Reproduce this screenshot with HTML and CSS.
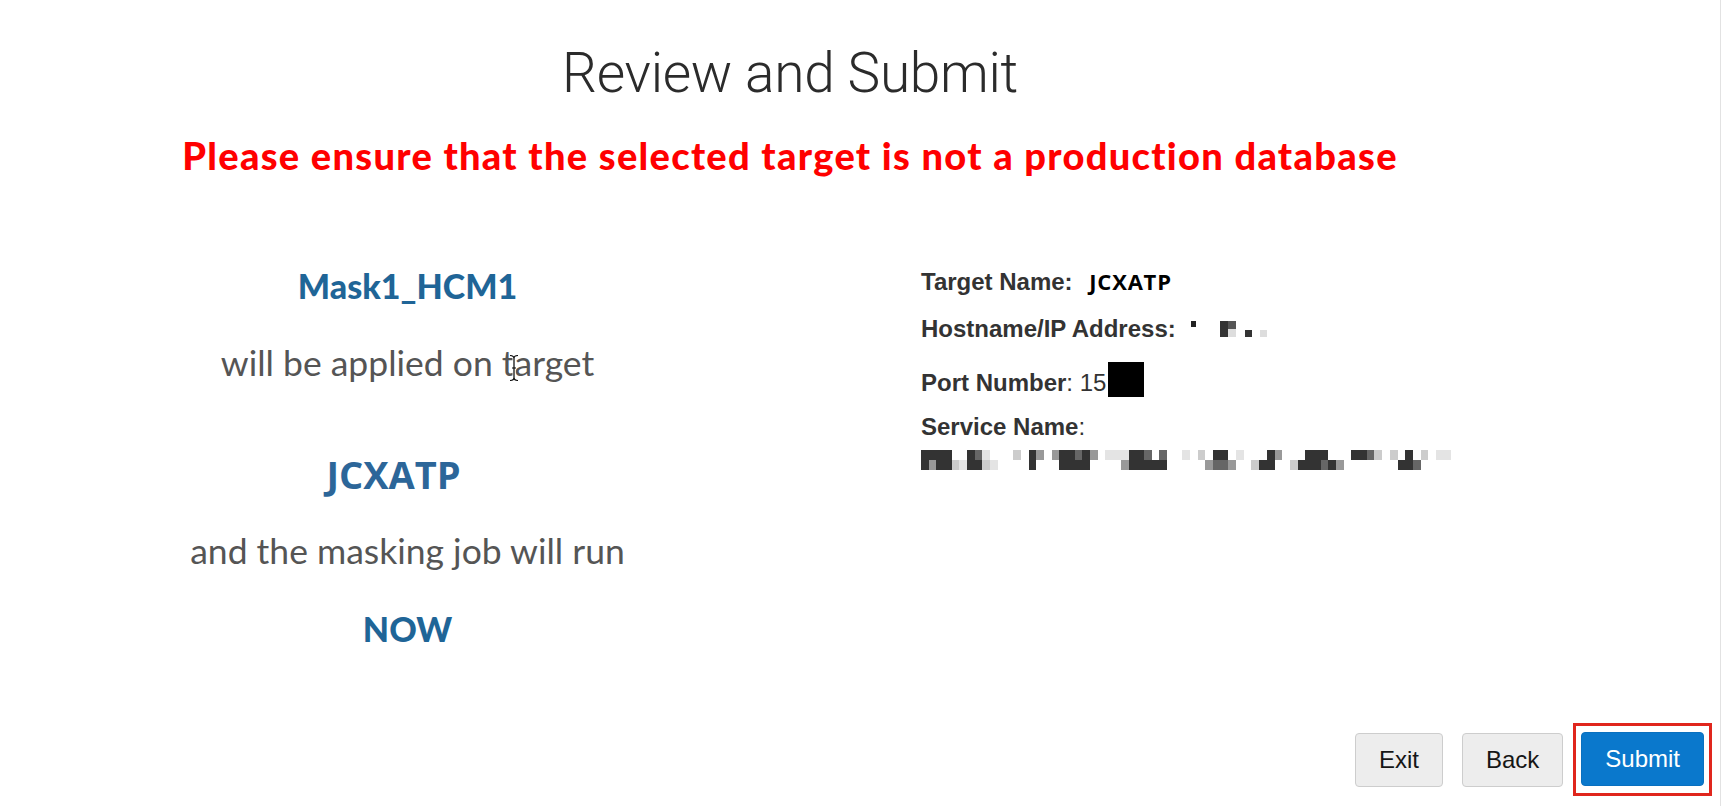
FILE: index.html
```html
<!DOCTYPE html>
<html lang="en">
<head>
<meta charset="utf-8">
<title>Review and Submit</title>
<link rel="stylesheet" href="styles.css">
</head>
<body>
<div class="page">
  <main class="wizard">
    <h1 class="title">Review and Submit</h1>
    <p class="warning">Please ensure that the selected target is not a production database</p>
    <div class="summary">
      <div class="summary-left">
        <div class="name">Mask1_HCM1</div>
        <div class="phrase">will be applied on target</div>
        <div class="target">JCXATP</div>
        <div class="phrase phrase-run">and the masking job will run</div>
        <div class="name name-now">NOW</div>
        <svg class="cursor" width="12" height="28" viewBox="0 0 12 28" aria-hidden="true">
          <path d="M2 1.5 Q6 1.5 6 4.5 Q6 1.5 10 1.5 M6 4.5 V23.5 M2 26.5 Q6 26.5 6 23.5 Q6 26.5 10 26.5 M4 14 H8" fill="none" stroke="#fff" stroke-width="3"/>
          <path d="M2 1.5 Q6 1.5 6 4.5 Q6 1.5 10 1.5 M6 4.5 V23.5 M2 26.5 Q6 26.5 6 23.5 Q6 26.5 10 26.5 M4 14 H8" fill="none" stroke="#000" stroke-width="1.2"/>
        </svg>
      </div>
      <div class="details">
        <div class="row"><span class="label">Target Name:</span> <span class="target-value">JCXATP</span></div>
        <div class="row"><span class="label">Hostname/IP Address:</span> <svg class="redact-host" width="78" height="16" viewBox="0 0 78 16" shape-rendering="crispEdges" aria-hidden="true">
            <rect x="1" y="0" width="5" height="6" fill="#222"/>
            <rect x="30" y="0" width="8" height="16" fill="#333"/>
            <rect x="38" y="0" width="8" height="8" fill="#555"/>
            <rect x="38" y="8" width="8" height="8" fill="#ddd"/>
            <rect x="55" y="9" width="7" height="7" fill="#333"/>
            <rect x="70" y="9" width="7" height="7" fill="#ddd"/>
          </svg></div>
        <div class="row"><span class="label">Port Number</span>: 15<span class="redact-port"></span></div>
        <div class="row"><span class="label">Service Name</span>:</div>
        <svg class="redact-service" width="538" height="20" viewBox="0 0 70 2" preserveAspectRatio="none" shape-rendering="crispEdges" aria-hidden="true">
          <g fill="#333">
            <rect x="0" y="0" width="4" height="1"/><rect x="0" y="1" width="1" height="1"/><rect x="2" y="1" width="2" height="1"/>
            <rect x="6" y="0" width="1" height="2"/><rect x="7" y="1" width="1" height="1"/>
            <rect x="14" y="0" width="1" height="2"/>
            <rect x="18" y="0" width="2" height="2"/><rect x="20" y="1" width="2" height="1"/><rect x="21" y="0" width="1" height="1"/>
            <rect x="27" y="0" width="2" height="2"/><rect x="29" y="1" width="3" height="1"/>
            <rect x="38" y="0" width="2" height="1"/>
            <rect x="44" y="1" width="2" height="1"/><rect x="45" y="0" width="1" height="1"/>
            <rect x="49" y="1" width="5" height="1"/><rect x="50" y="0" width="3" height="1"/>
            <rect x="56" y="0" width="2" height="1"/>
            <rect x="62" y="1" width="2" height="1"/><rect x="63" y="0" width="1" height="1"/>
          </g>
          <g fill="#666">
            <rect x="7" y="0" width="1" height="1"/><rect x="20" y="0" width="1" height="1"/><rect x="29" y="0" width="1" height="1"/><rect x="31" y="0" width="1" height="1"/>
            <rect x="38" y="1" width="2" height="1"/><rect x="52" y="1" width="1" height="1"/><rect x="58" y="0" width="1" height="1"/><rect x="64" y="1" width="1" height="1"/>
          </g>
          <g fill="#999">
            <rect x="1" y="1" width="1" height="1"/><rect x="15" y="0" width="1" height="1"/><rect x="17" y="0" width="1" height="1"/><rect x="22" y="0" width="1" height="1"/>
            <rect x="26" y="1" width="1" height="1"/><rect x="37" y="1" width="1" height="1"/><rect x="40" y="1" width="1" height="1"/><rect x="46" y="0" width="1" height="1"/><rect x="54" y="1" width="1" height="1"/>
          </g>
          <g fill="#ccc">
            <rect x="4" y="1" width="1" height="1"/><rect x="8" y="1" width="1" height="1"/><rect x="12" y="0" width="1" height="1"/><rect x="36" y="0" width="1" height="1"/>
            <rect x="43" y="1" width="1" height="1"/><rect x="48" y="1" width="1" height="1"/><rect x="59" y="0" width="1" height="1"/><rect x="61" y="0" width="1" height="1"/><rect x="65" y="0" width="1" height="1"/>
          </g>
          <g fill="#e4e4e4">
            <rect x="5" y="1" width="1" height="1"/><rect x="8" y="0" width="1" height="1"/><rect x="9" y="1" width="1" height="1"/><rect x="24" y="0" width="3" height="1"/>
            <rect x="34" y="0" width="1" height="1"/><rect x="41" y="0" width="1" height="1"/><rect x="67" y="0" width="2" height="1"/>
          </g>
        </svg>
      </div>
    </div>
  </main>
  <footer class="actions">
    <button class="btn btn-exit" type="button">Exit</button>
    <button class="btn btn-back" type="button">Back</button>
    <div class="highlight">
      <button class="btn btn-primary" type="button">Submit</button>
    </div>
  </footer>
</div>
</body>
</html>
```

FILE: styles.css
```css
* {
  box-sizing: border-box;
}

html, body {
  margin: 0;
  padding: 0;
  background: #fff;
}

.page {
  width: 1721px;
  height: 806px;
  display: flex;
  flex-direction: column;
  border-right: 1px solid #e2e2e2;
  overflow: hidden;
}

.wizard {
  flex: 1;
  width: 1580px;
  padding-top: 41px;
}

.title {
  margin: 0;
  font-family: Roboto, "Liberation Sans", sans-serif;
  font-weight: 300;
  font-size: 55px;
  line-height: 64px;
  color: #2b2b2b;
  text-align: center;
  letter-spacing: -0.3px;
}

.warning {
  margin: 27px 0 0;
  font-family: Lato, "Open Sans", sans-serif;
  font-weight: 900;
  font-size: 38px;
  line-height: 46px;
  letter-spacing: 1.3px;
  color: #ff0000;
  text-align: center;
}

.summary {
  display: grid;
  grid-template-columns: 815px 1fr;
  margin-top: 88px;
}

.summary-left {
  position: relative;
  text-align: center;
}

.name {
  font-family: Lato, "Open Sans", sans-serif;
  font-weight: 900;
  font-size: 34px;
  line-height: 40px;
  color: #1f6597;
}

.name-now {
  margin-top: 38px;
}

.phrase {
  margin-top: 37px;
  font-family: Lato, "Open Sans", sans-serif;
  font-weight: 400;
  font-size: 35.5px;
  line-height: 40px;
  color: #555;
}

.phrase-run {
  margin-top: 35px;
}

.target {
  margin-top: 69px;
  margin-right: 28px;
  font-family: "Open Sans", Lato, sans-serif;
  font-weight: 700;
  font-size: 38px;
  line-height: 44px;
  color: #2c6699;
}

.cursor {
  position: absolute;
  left: 508px;
  top: 88px;
}

.details {
  padding-top: 3px;
  padding-left: 106px;
  font-family: "Liberation Sans", Arial, sans-serif;
  font-size: 24px;
  color: #333;
}

.row {
  height: 24px;
  line-height: 24px;
  margin-bottom: 24px;
  white-space: nowrap;
}

.row:nth-child(2) {
  margin-bottom: 21px;
}

.row:nth-child(3) {
  margin-bottom: 29px;
}

.row:nth-child(4) {
  margin-bottom: 0;
}

.label {
  font-weight: 700;
}

.target-value {
  margin-left: 10px;
  font-family: "Open Sans", sans-serif;
  font-weight: 700;
  font-size: 22px;
  letter-spacing: 0.8px;
  color: #000;
}

.redact-host {
  margin-left: 8px;
  vertical-align: baseline;
}

.redact-port {
  display: inline-block;
  width: 36px;
  height: 35px;
  margin-left: 2px;
  vertical-align: -6px;
  background: #000;
}

.redact-service {
  display: block;
  margin-top: 11px;
}

.actions {
  display: flex;
  justify-content: flex-end;
  align-items: center;
  padding: 0 8px 10px 0;
}

.btn {
  height: 54px;
  padding: 0 23px;
  border: 1px solid #cdcdcd;
  border-radius: 4px;
  background: #ededed;
  color: #161616;
  font-family: "Liberation Sans", Arial, sans-serif;
  font-size: 24px;
  cursor: pointer;
}

.btn-exit {
  margin-right: 19px;
}

.btn-back {
  margin-right: 10px;
}

.highlight {
  padding: 6px 5px 7px;
  border: 3px solid #e0261d;
}

.btn-primary {
  display: block;
  background: #0a78cc;
  border-color: #0a70bf;
  color: #fff;
}
```
